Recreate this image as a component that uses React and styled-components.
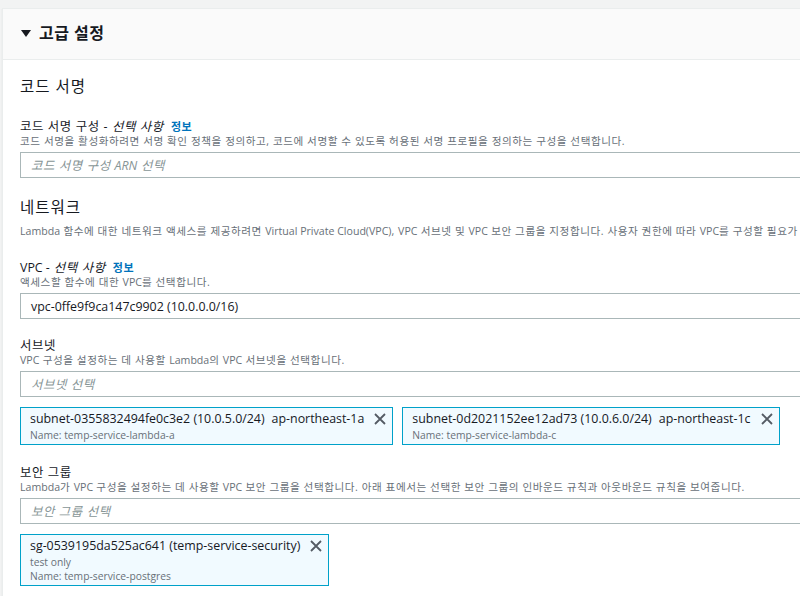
import React from "react";
import styled, { createGlobalStyle } from "styled-components";

const GlobalStyle = createGlobalStyle`
  html, body {
    margin: 0;
    padding: 0;
    background: #f2f3f3;
    overflow: hidden;
  }
  body {
    font-family: "Open Sans", "Noto Sans CJK KR", sans-serif;
    color: #16191f;
  }
`;

const Page = styled.div`
  padding: 8px 0 0 2px;
  width: 1200px;
  height: 596px;
  box-sizing: border-box;
`;

const Panel = styled.section`
  background: #fff;
  border: 1px solid #eaeded;
  border-right: none;
  box-shadow: 0 1px 1px 0 rgba(0, 28, 36, 0.1);
`;

const PanelHeader = styled.header`
  display: flex;
  align-items: center;
  gap: 8px;
  height: 51px;
  padding: 0 18px 4px;
  background: #fafafa;
  border-bottom: 1px solid #eaeded;
  box-sizing: border-box;
  font-size: 16px;
  font-weight: 700;
  letter-spacing: 0.5px;
`;

const Caret = styled.span`
  width: 0;
  height: 0;
  border-left: 5px solid transparent;
  border-right: 5px solid transparent;
  border-top: 7px solid #16191f;
  margin-top: 2px;
`;

const Content = styled.div`
  padding: 15px 0 20px 17px;
`;

const Heading = styled.h2`
  margin: ${(p) => p.$top || 0}px 0 0;
  font-size: 15.5px;
  font-weight: 400;
  line-height: 22px;
  letter-spacing: 1px;
`;

/* latin runs keep their natural spacing inside wide-tracked korean text */
const En = styled.span`
  letter-spacing: 0;
`;

const SectionDesc = styled.p`
  margin: 6px 0 0;
  font-size: 10.6px;
  line-height: 14px;
  letter-spacing: 0.55px;
  color: #687078;
  white-space: nowrap;
`;

const Field = styled.div`
  margin-top: ${(p) => p.$top || 16}px;
`;

const Label = styled.div`
  display: flex;
  align-items: baseline;
  padding-top: 3px;
  font-size: 12.4px;
  line-height: 15px;
  letter-spacing: 0.6px;
  white-space: nowrap;
`;

const Optional = styled.i`
  margin-left: 4px;
`;

const InfoLink = styled.a`
  margin-left: 7px;
  font-size: 11px;
  font-weight: 700;
  color: #0073bb;
  text-decoration: none;
`;

const Desc = styled.div`
  font-size: 10.6px;
  line-height: 14px;
  letter-spacing: 0.55px;
  color: #687078;
  white-space: nowrap;
`;

const Select = styled.div`
  margin-top: 4px;
  height: 26px;
  box-sizing: border-box;
  border: 1px solid #aab7b8;
  display: flex;
  align-items: center;
  padding: 0 10px;
  font-size: 12.4px;
  white-space: pre;
  letter-spacing: ${(p) => (p.$placeholder ? "0.6px" : "0")};
  color: ${(p) => (p.$placeholder ? "#879596" : "#16191f")};
  font-style: ${(p) => (p.$placeholder ? "italic" : "normal")};
  background: #fff;
`;

const TokenList = styled.div`
  margin-top: ${(p) => p.$top || 10}px;
  display: flex;
  gap: 9px;
`;

const Token = styled.div`
  display: flex;
  align-items: flex-start;
  gap: 10px;
  padding: 2px 6px 2px 9px;
  border: 1px solid #00a1c9;
  background: #f1faff;
`;

const TokenText = styled.div`
  display: flex;
  flex-direction: column;
`;

const TokenTitle = styled.div`
  font-size: 12.4px;
  line-height: 18px;
  white-space: nowrap;
`;

const Zone = styled.span`
  margin-left: 7px;
`;

const TokenSub = styled.div`
  font-size: 10.3px;
  line-height: 14px;
  color: #687078;
  white-space: nowrap;
`;

const Close = styled.button`
  border: none;
  background: none;
  padding: 0;
  margin-top: 3px;
  width: 12px;
  height: 12px;
  display: flex;
  cursor: pointer;
`;

function CloseIcon() {
  return (
    <Close aria-label="remove">
      <svg width="12" height="12" viewBox="0 0 12 12">
        <path d="M1 1L11 11M11 1L1 11" stroke="#545b64" strokeWidth="1.8" />
      </svg>
    </Close>
  );
}

const subnets = [
  { id: "subnet-0355832494fe0c3e2 (10.0.5.0/24)", zone: "ap-northeast-1a", name: "Name: temp-service-lambda-a" },
  { id: "subnet-0d2021152ee12ad73 (10.0.6.0/24)", zone: "ap-northeast-1c", name: "Name: temp-service-lambda-c" },
];

export default function App() {
  return (
    <Page>
      <GlobalStyle />
      <Panel>
        <PanelHeader>
          <Caret />
          고급 설정
        </PanelHeader>
        <Content>
          <Heading>코드 서명</Heading>
          <Field $top={19}>
            <Label>
              코드 서명 구성 -<Optional>선택 사항</Optional>
              <InfoLink>정보</InfoLink>
            </Label>
            <Desc>
              코드 서명을 활성화하려면 서명 확인 정책을 정의하고, 코드에 서명할 수 있도록 허용된 서명 프로필을 정의하는 구성을 선택합니다.
            </Desc>
            <Select $placeholder>
              코드 서명 구성 <En>ARN</En> 선택
            </Select>
          </Field>

          <Heading $top={18}>네트워크</Heading>
          <SectionDesc>
            <En>Lambda</En> 함수에 대한 네트워크 액세스를 제공하려면 <En>Virtual Private Cloud(VPC)</En>, <En>VPC</En> 서브넷 및 <En>VPC</En> 보안 그룹을 지정합니다. 사용자 권한에 따라 <En>VPC</En>를 구성할 필요가 없을 수도 있습니다.
          </SectionDesc>
          <Field $top={19}>
            <Label>
              <En>VPC -</En>
              <Optional>선택 사항</Optional>
              <InfoLink>정보</InfoLink>
            </Label>
            <Desc>
              액세스할 함수에 대한 <En>VPC</En>를 선택합니다.
            </Desc>
            <Select>vpc-0ffe9f9ca147c9902 (10.0.0.0/16)</Select>
          </Field>

          <Field>
            <Label>서브넷</Label>
            <Desc>
              <En>VPC</En> 구성을 설정하는 데 사용할 <En>Lambda</En>의 <En>VPC</En> 서브넷을 선택합니다.
            </Desc>
            <Select $placeholder>서브넷 선택</Select>
            <TokenList>
              {subnets.map((s) => (
                <Token key={s.id}>
                  <TokenText>
                    <TokenTitle>
                      {s.id}
                      <Zone>{s.zone}</Zone>
                    </TokenTitle>
                    <TokenSub>{s.name}</TokenSub>
                  </TokenText>
                  <CloseIcon />
                </Token>
              ))}
            </TokenList>
          </Field>

          <Field $top={17}>
            <Label>보안 그룹</Label>
            <Desc>
              <En>Lambda</En>가 <En>VPC</En> 구성을 설정하는 데 사용할 <En>VPC</En> 보안 그룹을 선택합니다. 아래 표에서는 선택한 보안 그룹의 인바운드 규칙과 아웃바운드 규칙을 보여줍니다.
            </Desc>
            <Select $placeholder>보안 그룹 선택</Select>
            <TokenList>
              <Token>
                <TokenText>
                  <TokenTitle>sg-0539195da525ac641 (temp-service-security)</TokenTitle>
                  <TokenSub>test only</TokenSub>
                  <TokenSub>Name: temp-service-postgres</TokenSub>
                </TokenText>
                <CloseIcon />
              </Token>
            </TokenList>
          </Field>
        </Content>
      </Panel>
    </Page>
  );
}
